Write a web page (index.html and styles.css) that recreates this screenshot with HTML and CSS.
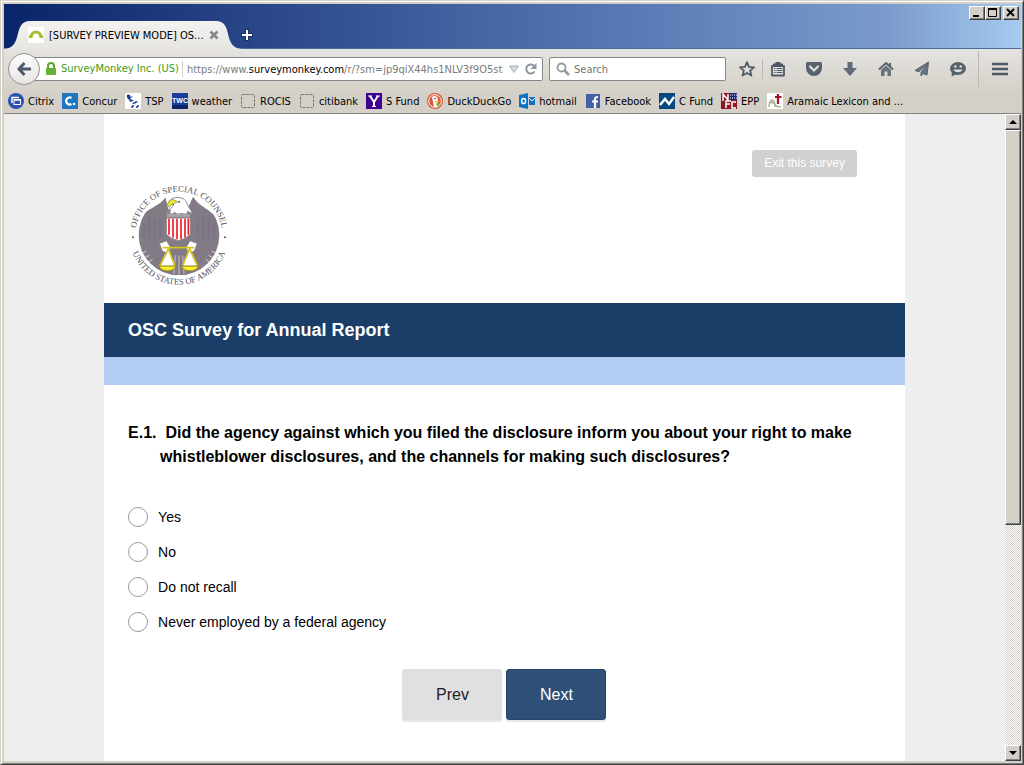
FILE: index.html
```html
<!DOCTYPE html>
<html lang="en">
<head>
<meta charset="utf-8">
<title>[SURVEY PREVIEW MODE] OSC Survey for Annual Report</title>
<link rel="stylesheet" href="styles.css">
</head>
<body>
<div class="window">
  <header class="chrome">
    <div class="titlebar">
      <div class="tab">
        <svg class="favicon" viewBox="0 0 16 16" aria-hidden="true"><rect width="16" height="16" rx="1" fill="#fff"/><path d="M3 11C3 3 13 3 13 11" fill="none" stroke="#a4be34" stroke-width="3"/><circle cx="2.500" cy="9.500" r="1.800" fill="#a4be34"/><circle cx="13.500" cy="9.500" r="1.800" fill="#a4be34"/></svg>
        <span class="tab-title">[SURVEY PREVIEW MODE] OS...</span>
        <button class="tab-close" aria-label="Close tab"><svg viewBox="0 0 10 10"><path d="M1.500 1.500l7 7M8.500 1.500l-7 7" stroke="#83888c" stroke-width="2.600"/></svg></button>
      </div>
      <button class="new-tab" aria-label="New tab"><svg viewBox="0 0 12 12"><path d="M6 0v12M0 6h12" stroke="#1c2f60" stroke-width="4"/><path d="M6 1v10M1 6h10" stroke="#fff" stroke-width="2"/></svg></button>
      <div class="controls">
        <button class="bevel control" aria-label="Minimize"><svg viewBox="0 0 12 10"><path d="M2 8h6" stroke="#000" stroke-width="2"/></svg></button>
        <button class="bevel control" aria-label="Maximize"><svg viewBox="0 0 12 10"><path d="M1.500 1v7.500h8V1M1 1h9" fill="none" stroke="#000"/><path d="M1 1h9" stroke="#000" stroke-width="2"/></svg></button>
        <button class="bevel control control-close" aria-label="Close"><svg viewBox="0 0 12 10"><path d="M2 1l7 7M9 1l-7 7" stroke="#000" stroke-width="1.800"/></svg></button>
      </div>
    </div>

    <div class="nav">
      <button class="back" aria-label="Back"><svg viewBox="0 0 16 16"><path d="M8.500 2L3 8l5.500 6M3 8h12" fill="none" stroke="#4c5a67" stroke-width="3"/></svg></button>
      <div class="urlbar">
        <svg class="lock" viewBox="0 0 12 14" aria-hidden="true"><path d="M3 7V4a3 3 0 0 1 6 0v3" fill="none" stroke="#5ba52e" stroke-width="2"/><rect x="1" y="6" width="10" height="7" rx="1" fill="#64b32e"/></svg>
        <span class="identity">SurveyMonkey Inc. (US)</span>
        <div class="url" role="textbox" aria-label="Address" contenteditable="true" spellcheck="false">https://www.<span class="domain">surveymonkey.com</span>/r/?sm=jp9qiX44hs1NLV3f9O5sth</div>
        <button class="url-btn" aria-label="History"><svg viewBox="0 0 12 12"><path d="M1.500 3h9L6 9.500z" fill="#d5dbe2" stroke="#a9b0b8"/></svg></button>
        <button class="url-btn" aria-label="Reload"><svg viewBox="0 0 12 12"><path d="M9.500 8.500A4.500 4.500 0 1 1 9.500 3.500" fill="none" stroke="#8d98a5" stroke-width="2"/><path d="M11.500 0v6h-6z" fill="#8d98a5"/></svg></button>
      </div>
      <div class="search">
        <svg viewBox="0 0 14 14" aria-hidden="true"><circle cx="5.500" cy="5.500" r="4" fill="none" stroke="#999" stroke-width="1.800"/><path d="M8.500 8.500l4.500 4.500" stroke="#999" stroke-width="2.600"/></svg>
        <input type="text" placeholder="Search" aria-label="Search">
      </div>
      <div class="tools">
        <button class="tool tool-near" aria-label="Bookmark"><svg viewBox="0 0 16 16"><path d="M8 1.200l2 4.700 5 .4-3.800 3.300 1.200 5L8 12l-4.400 2.600 1.200-5L1 6.300l5-.4z" fill="none" stroke="#4e5a66" stroke-width="1.800" stroke-linejoin="round"/></svg></button>
        <span class="divider"></span>
        <button class="tool tool-near" aria-label="Bookmarks list"><svg viewBox="0 0 16 16"><path d="M2 5h12v9.500H2z" fill="#e2e0dc" stroke="#4e5a66" stroke-width="1.800" stroke-linejoin="round"/><path d="M5.500 1h5v1.500H13V5H3V2.500h2.500z" fill="#4e5a66"/><path d="M4 7.500h1.500M6.500 7.500h6M4 9.500h1.500M6.500 9.500h6M4 11.500h1.500M6.500 11.500h6" stroke="#4e5a66"/></svg></button>
        <button class="tool" aria-label="Pocket"><svg viewBox="0 0 16 16"><path d="M1.500 1h13a1.500 1.500 0 0 1 1.500 1.500V7A8 8 0 0 1 0 7V2.500A1.500 1.500 0 0 1 1.500 1z" fill="#56626e"/><path d="M4 5.500l4 4 4-4" fill="none" stroke="#e2e0dc" stroke-width="2.200" stroke-linecap="round"/></svg></button>
        <button class="tool" aria-label="Downloads"><svg viewBox="0 0 16 16"><path d="M5.500 1h5v6H15l-7 8-7-8h4.500z" fill="#5f6b77"/></svg></button>
        <button class="tool" aria-label="Home"><svg viewBox="0 0 16 16"><path d="M1 8.500L8 2l7 6.500" fill="none" stroke="#56626e" stroke-width="2"/><path d="M3 9l5-4.500L13 9v6H9.500v-4.500h-3V15H3z" fill="#66727d"/><path d="M12 2v4" stroke="#56626e" stroke-width="2"/></svg></button>
        <button class="tool" aria-label="Share"><svg viewBox="0 0 16 16"><path d="M14.500 1L1 9.500l4 1.200zM14.500 1L7 11.500V15l2-2.500 4 1.500z" fill="#66727d" stroke="#56626e" stroke-linejoin="round"/></svg></button>
        <button class="tool" aria-label="Chat"><svg viewBox="0 0 16 16"><ellipse cx="8" cy="7.500" rx="8" ry="6.500" fill="#56626e"/><path d="M2 10l-.5 5.500L7 13z" fill="#56626e"/><circle cx="5.300" cy="5.500" r="1.200" fill="#e2e0dc"/><circle cx="10.700" cy="5.500" r="1.200" fill="#e2e0dc"/><path d="M3.500 8.500h9c-1 3.500-8 3.500-9 0z" fill="#e2e0dc"/></svg></button>
        <span class="divider divider-tall"></span>
        <button class="tool tool-menu" aria-label="Menu"><svg viewBox="0 0 16 16"><path d="M1 3h14M1 8h14M1 13h14" stroke="#4e5a66" stroke-width="2.600" stroke-linecap="round"/></svg></button>
      </div>
    </div>

    <nav class="bookmarks">
      <a href="#"><svg viewBox="0 0 16 16"><circle cx="8" cy="8" r="8" fill="#2d50b4"/><path d="M4 10V4.500h7" fill="none" stroke="#fff" stroke-width="1.500"/><rect x="6" y="6.500" width="6.500" height="5" fill="none" stroke="#fff"/><path d="M6 7h6.500" stroke="#fff" stroke-width="1.500"/></svg>Citrix</a>
      <a href="#"><svg viewBox="0 0 16 16"><rect width="16" height="16" fill="#1f76c0"/><path d="M9.500 5A3.500 3.500 0 1 0 9.500 11" fill="none" stroke="#fff" stroke-width="2.200"/><circle cx="12" cy="11" r="1.300" fill="#fff"/></svg>Concur</a>
      <a href="#"><svg viewBox="0 0 16 16"><rect width="16" height="16" fill="#fff"/><path d="M2 2c2-1.500 4 0 3 2l3-1-3 3 4 1.500-4 1.500c0-3-4-3-3-7zM7 11c1-2 4-3 6-3-1 2-3 3-6 3zM6 15c0-2 1-3 3-3 0 2-1 3-3 3zM11 15c0-2 1-3 3-3 0 2-1 3-3 3z" fill="#173a94"/></svg>TSP</a>
      <a href="#"><svg viewBox="0 0 16 16"><rect width="16" height="16" fill="#17409a"/><path d="M0 12h16v4H0z" fill="#0c2569"/><text x="8" y="10" class="twc" text-anchor="middle">TWC</text></svg>weather</a>
      <a href="#"><svg viewBox="0 0 16 16"><rect x="1.500" y="1.500" width="13" height="13" rx="1" fill="none" stroke="#777" stroke-dasharray="3 1"/></svg>ROCIS</a>
      <a href="#"><svg viewBox="0 0 16 16"><rect x="1.500" y="1.500" width="13" height="13" rx="1" fill="none" stroke="#777" stroke-dasharray="3 1"/></svg>citibank</a>
      <a href="#"><svg viewBox="0 0 16 16"><rect width="16" height="16" fill="#400090"/><path d="M4 3l4 6v5M12 3L8 9" fill="none" stroke="#fff" stroke-width="2"/><path d="M2 3h4M10 3h4M6 13.500h4" stroke="#fff"/></svg>S Fund</a>
      <a href="#"><svg viewBox="0 0 16 16"><circle cx="8" cy="8" r="8" fill="#de5833"/><circle cx="8" cy="8" r="6.300" fill="none" stroke="#fff"/><path d="M5 4c2-2 6-1 6 3l-1 7H7z" fill="#fff"/><circle cx="8" cy="5.500" r=".8" fill="#234"/><path d="M8 8h5l-4 2z" fill="#fdb913"/><path d="M8 11l4-1v3z" fill="#65bc46"/></svg>DuckDuckGo</a>
      <a href="#"><svg viewBox="0 0 16 16"><path d="M0 2l9-2v16l-9-2zM10 4h6v8h-6z" fill="#0b72c6"/><path d="M10 5l3 3 3-3" fill="none" stroke="#fff"/><ellipse cx="4.600" cy="8" rx="2" ry="2.600" fill="none" stroke="#fff" stroke-width="1.500"/></svg>hotmail</a>
      <a href="#"><svg viewBox="0 0 16 16"><rect x="1" y="1" width="14" height="14" fill="#4560a4"/><path d="M10 15V6c0-2 1-2 3-2M7 8.500h6" fill="none" stroke="#fff" stroke-width="2.200"/></svg>Facebook</a>
      <a href="#"><svg viewBox="0 0 16 16"><rect width="16" height="16" fill="#07497f"/><path d="M1 12l5-6 4 5 5-7" fill="none" stroke="#fff" stroke-width="2.500"/></svg>C Fund</a>
      <a href="#"><svg viewBox="0 0 16 16"><rect width="16" height="16" fill="#8d1624"/><path d="M8 0h8v7H8z" fill="#17277a"/><path d="M2 8V1l5 6V1M5 15V8h5M5 11h4M15 9h-4v6h4" fill="none" stroke="#fff" stroke-width="1.500"/><path d="M9 2h7M9 5h7" stroke="#fff" stroke-dasharray="1 1"/></svg>EPP</a>
      <a href="#"><svg viewBox="0 0 16 16"><rect width="16" height="16" fill="#fff"/><path d="M2 14c0-4 1-6 3-7 2 1 3 4 3 6l6 1M2 10c3-1 6 0 7 3" fill="none" stroke="#a9b292" stroke-width="1.500"/><path d="M11 1v10M8 4h6.500" stroke="#a31224" stroke-width="2.200"/></svg>Aramaic Lexicon and ...</a>
    </nav>
  </header>

  <div class="viewport">
    <div class="backdrop">
      <main class="survey">
        <div class="masthead">
          <button class="exit">Exit this survey</button>
          <svg class="seal" viewBox="24 15 300 300" role="img" aria-label="Office of Special Counsel seal">
            <defs>
              <path id="arc-top" d="M47 165A130 130 0 0 1 307 165"/>
              <path id="arc-bottom" d="M28 165A149 149 0 0 0 326 165"/>
              <clipPath id="disc"><circle cx="177" cy="165" r="121"/></clipPath>
            </defs>
            <g class="seal-text">
              <text text-anchor="middle"><textPath href="#arc-top" startOffset="50%">OFFICE OF SPECIAL COUNSEL</textPath></text>
              <text text-anchor="middle"><textPath href="#arc-bottom" startOffset="50%">UNITED STATES OF AMERICA</textPath></text>
              <circle cx="39" cy="172" r="3"/><circle cx="315" cy="172" r="3"/>
            </g>
            <g clip-path="url(#disc)">
              <path d="M136 52C120 82 60 90 55 130V210C65 250 90 270 110 285H245C275 260 300 230 300 190V130C285 90 230 80 220 48L205 82 145 88Z" fill="#827b85"/>
              <path d="M88 112v65M104 115v70M120 118v52M266 112v65M250 115v70M234 118v52M73 130v50M282 130v50" stroke="#756d82" stroke-width="7" stroke-dasharray="4 3"/>
              <path d="M57 222l22-8M66 238l22-12M78 253l20-16M297 222l-22-8M288 238l-22-12M276 253l-20-16" stroke="#fff" stroke-width="2"/>
            </g>
            <path d="M144 72C150 46 194 46 201 70C206 84 214 90 218 102L203 94 199 112 186 99 175 112 165 97 148 109 151 90 136 99C146 90 155 84 162 74Z" fill="#fff" stroke="#8d8790" stroke-width="3"/>
            <path d="M142 74C149 55 162 56 172 66C162 71 153 70 148 82Z" fill="#f4ed2c" stroke="#81782a" stroke-width="2"/>
            <circle cx="177" cy="65" r="3" fill="#555"/>
            <path d="M139 101H211V112H139Z" fill="#aaa3aa" stroke="#706977"/>
            <path d="M139 114H211V163Q197 178 175 182Q153 178 139 163Z" fill="#fff" stroke="#8f8389" stroke-width="3"/>
            <path d="M147 116v48M159 116v57M171 116v62M183 116v62M195 116v57M205 116v48" stroke="#ed1d28" stroke-width="5"/>
            <path d="M118 190l22-8 12 20-7 18-18-6zM232 190l-22-8-12 20 7 18 18-6z" fill="#fff" stroke="#858087" stroke-width="3"/>
            <path d="M145 212l-24 46h46zM209 212l-22 46h45z" fill="#fff"/>
            <path d="M166 226l-4 56M177 226v58M188 226l4 56" stroke="#c9c4cb" stroke-width="3"/>
            <path d="M128 203H222M145 206l-26 53M145 206l20 53M209 206l-22 53M209 206l24 53" fill="none" stroke="#d9c41c" stroke-width="5"/>
            <path d="M116 258h52c-4 20-46 20-52 0zM184 258h52c-6 20-47 20-52 0z" fill="#f5ed27" stroke="#8b7d29" stroke-width="3"/>
          </svg>
        </div>
        <h1 class="title">OSC Survey for Annual Report</h1>
        <div class="progress-band"></div>
        <form class="form">
          <fieldset class="question">
            <legend>E.1.&nbsp; Did the agency against which you filed the disclosure inform you about your right to make whistleblower disclosures, and the channels for making such disclosures?</legend>
            <label class="option"><input type="radio" name="informed"><span>Yes</span></label>
            <label class="option"><input type="radio" name="informed"><span>No</span></label>
            <label class="option"><input type="radio" name="informed"><span>Do not recall</span></label>
            <label class="option"><input type="radio" name="informed"><span>Never employed by a federal agency</span></label>
          </fieldset>
          <div class="actions">
            <button type="button" class="btn">Prev</button>
            <button type="button" class="btn btn-next">Next</button>
          </div>
        </form>
      </main>
    </div>
    <div class="scrollbar">
      <button class="bevel arrow" aria-label="Scroll up"><svg viewBox="0 0 8 4"><path d="M0 4l4-4 4 4z"/></svg></button>
      <div class="bevel thumb"></div>
      <div class="track"></div>
      <button class="bevel arrow" aria-label="Scroll down"><svg viewBox="0 0 8 4"><path d="M0 0h8L4 4z"/></svg></button>
    </div>
  </div>
</div>
</body>
</html>
```
FILE: styles.css
```css
* { box-sizing: border-box; }

body { margin: 0; font-family: "Liberation Sans", Arial, sans-serif; }

button { padding: 0; border: 0; background: none; font: inherit; color: inherit; }

svg { display: block; flex: none; }

.window {
  display: flex;
  flex-direction: column;
  min-height: 100vh;
  padding: 3px 2px 3px 3px;
  border: 1px solid;
  border-color: #d4d0c8 #404040 #404040 #d4d0c8;
  background: #d4d0c8;
  box-shadow: inset 1px 1px #fff, inset -1px -1px #808080;
}

.chrome {
  border-bottom: 1px solid #85827c;
  background: linear-gradient(#e5e3df 45px, #d4d0c8 90px);
  font-family: "DejaVu Sans Condensed", Tahoma, sans-serif;
  font-size: 11px;
  color: #000;
}

/* Title bar and tab */
.titlebar {
  display: flex;
  align-items: flex-end;
  height: 45px;
  border-bottom: 1px solid #4a6a9c;
  background: linear-gradient(90deg, #0a246a, #5577b3 60%, #7b9bcc 87%, #a6caf0);
}

.tab {
  display: flex;
  align-items: center;
  width: 238px;
  height: 28px;
  margin-bottom: -1px;
  padding: 0 23px 0 24px;
  background: linear-gradient(#f3f2f0, #e8e6e3);
  clip-path: path("M0 28C20 27 8 0 26 0H212C230 0 218 27 238 28Z");
}

.favicon { width: 16px; height: 16px; }
.tab-title { flex: 1; margin-left: 5px; white-space: nowrap; }
.tab-close svg { width: 10px; height: 10px; }
.new-tab { margin: 0 0 7px -1px; }
.new-tab svg { width: 12px; height: 12px; }

.controls { display: flex; align-self: flex-start; margin: 2px 2px 0 auto; }

.bevel {
  border: 1px solid;
  border-color: #fff #404040 #404040 #fff;
  background: #d4d0c8;
  box-shadow: inset -1px -1px #808080;
}

.control { display: grid; place-items: center; width: 16px; height: 14px; }
.control svg { width: 12px; height: 10px; }
.control-close { margin-left: 2px; }

/* Navigation toolbar */
.nav { display: flex; align-items: center; height: 40px; padding-left: 4px; }

.back {
  display: grid;
  place-items: center;
  z-index: 1;
  width: 32px;
  height: 32px;
  border: 1px solid #93918d;
  border-radius: 50%;
  background: linear-gradient(#fbfbfa, #e9e7e4);
}
.back svg { width: 16px; height: 16px; }

.urlbar {
  display: flex;
  flex: 1;
  align-items: center;
  min-width: 0;
  height: 24px;
  margin-left: -8px;
  padding: 0 5px 0 12px;
  border: 1px solid #85878a;
  border-radius: 2px;
  background: #fff;
}
.lock { width: 12px; height: 14px; }
.identity {
  margin: 0 4px;
  padding-right: 3px;
  border-right: 1px solid #d2d0cb;
  line-height: 16px;
  white-space: nowrap;
  color: #3f9a12;
}
.url { flex: 1; min-width: 0; overflow: hidden; white-space: nowrap; color: #7b7b7b; }
.domain { color: #000; }
.url-btn { margin-left: 5px; }
.url-btn svg { width: 12px; height: 12px; }

.search {
  display: flex;
  align-items: center;
  width: 177px;
  height: 24px;
  margin-left: 6px;
  padding: 0 6px;
  border: 1px solid #85878a;
  border-radius: 2px;
  background: #fff;
}
.search svg { width: 14px; height: 14px; }
.search input {
  flex: 1;
  min-width: 0;
  padding: 0 4px;
  border: 0;
  outline: 0;
  background: none;
  font: inherit;
}
.search input::placeholder { color: #757575; opacity: 1; }

.tools { display: flex; align-items: center; padding-left: 6px; }
.tool { display: grid; place-items: center; width: 36px; height: 24px; }
.tool svg { width: 16px; height: 16px; }
.tool-near { width: 30px; }
.tool-near + .tool { margin-left: 3px; }
.tool-menu { width: 42px; }
.divider { width: 1px; height: 20px; background: #bdbab4; }
.divider-tall { height: 36px; margin-left: 2px; }

/* Bookmarks toolbar */
.bookmarks { display: flex; gap: 8px; height: 24px; padding-left: 4px; overflow: hidden; }
.bookmarks a {
  display: flex;
  align-items: center;
  gap: 4px;
  white-space: nowrap;
  color: #000;
  text-decoration: none;
}
.bookmarks svg { width: 16px; height: 16px; }
.twc { font: bold 7px "Liberation Sans", sans-serif; fill: #fff; }

/* Page */
.viewport { display: flex; flex: 1; }
.backdrop { display: flex; flex: 1; justify-content: center; background: #eee; }
.survey { width: 80%; background: #fff; }

.masthead { display: flex; flex-direction: column; padding: 36px 48px 18px 24px; }
.exit {
  align-self: flex-end;
  padding: 0 12px;
  border-radius: 3px;
  background: #d0d0d0;
  font-size: 12px;
  line-height: 27px;
  color: #fff;
}
.seal { width: 100px; height: 100px; margin-top: 8px; overflow: visible; }
.seal-text { font: 26px "Liberation Serif", serif; fill: #55525a; }

.title {
  margin: 0;
  padding: 0 24px;
  background: #1a3e68;
  font-size: 18px;
  line-height: 54px;
  color: #fff;
}
.progress-band { height: 28px; background: #b3cdf2; }

.form { padding: 36px 24px 40px; }
.question { min-width: 0; margin: 0; padding: 0; border: 0; }
.question legend {
  margin-bottom: 30px;
  padding: 0 0 0 32px;
  text-indent: -32px;
  font-size: 16px;
  font-weight: bold;
  line-height: 24px;
  color: #000;
}
.option {
  display: flex;
  align-items: center;
  gap: 10px;
  height: 35px;
  font-size: 14px;
  color: #000;
}
.option input {
  appearance: none;
  width: 20px;
  height: 20px;
  margin: 0;
  border: 1px solid #999;
  border-radius: 50%;
  background: #fff;
}
.option input:checked { border-width: 6px; border-color: #2e5077; }

.actions { display: flex; justify-content: center; gap: 4px; margin-top: 30px; }
.btn {
  width: 100px;
  height: 51px;
  border-radius: 3px;
  background: #e0e0e0;
  box-shadow: 0 2px #e8e8e8;
  font-size: 16px;
  color: #222;
}
.btn-next { border: 1px solid #25466d; background: #2e5077; color: #fff; }

/* Scrollbar */
.scrollbar { display: flex; flex-direction: column; width: 16px; }
.arrow { display: grid; place-items: center; height: 16px; }
.arrow svg { width: 8px; height: 4px; }
.thumb { flex: 394; }
.track {
  flex: 221;
  background: repeating-conic-gradient(#fff 0 25%, #d4d0c8 0 50%) 0 0 / 2px 2px;
}
```
